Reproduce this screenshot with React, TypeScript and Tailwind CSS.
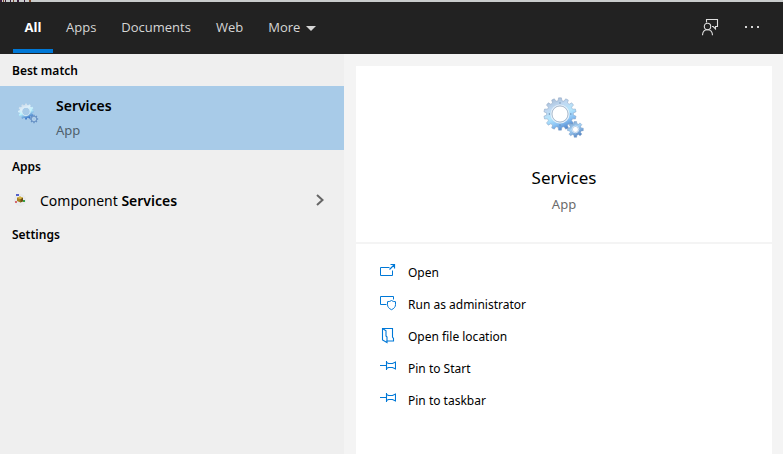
import React from 'react';

type IconProps = { className?: string };

// Outline of a cog: each tooth is a short trapezoid between the root and tip radius
const gearPath = (cx: number, cy: number, tip: number, root: number, teeth: number) => {
  const pts: string[] = [];
  const step = (Math.PI * 2) / teeth;
  for (let i = 0; i < teeth; i++) {
    const a = i * step - Math.PI / 2;
    [[-0.32, root], [-0.2, tip], [0.2, tip], [0.32, root]].forEach(([off, r]) => {
      const t = a + off * step;
      pts.push(`${(cx + r * Math.cos(t)).toFixed(2)} ${(cy + r * Math.sin(t)).toFixed(2)}`);
    });
  }
  return `M${pts.join('L')}Z`;
};

const hole = (cx: number, cy: number, r: number) =>
  `M${cx - r} ${cy}a${r} ${r} 0 1 0 ${r * 2} 0a${r} ${r} 0 1 0 ${-r * 2} 0Z`;

const GearsIcon: React.FC<IconProps> = ({ className }) => (
  <svg viewBox="0 0 48 48" className={className} aria-hidden="true">
    <defs>
      <linearGradient id="gear-big" x1="0.2" y1="0" x2="0.65" y2="1">
        <stop offset="0" stopColor="#a3b8d2" />
        <stop offset="0.3" stopColor="#c0d9f2" />
        <stop offset="0.55" stopColor="#b4e6fd" />
        <stop offset="0.75" stopColor="#8cc4f5" />
        <stop offset="1" stopColor="#4a7fc8" />
      </linearGradient>
      <linearGradient id="gear-small" x1="0" y1="0" x2="0.6" y2="1">
        <stop offset="0" stopColor="#6d93c2" />
        <stop offset="0.5" stopColor="#a6d2f5" />
        <stop offset="1" stopColor="#5887c4" />
      </linearGradient>
    </defs>
    <path
      d={gearPath(20, 20, 16.2, 13.4, 14) + hole(20, 20, 8.2)}
      fill="url(#gear-big)"
      fillRule="evenodd"
      stroke="#8ba3c0"
      strokeWidth="0.5"
    />
    <circle cx="20" cy="20" r="9" fill="none" stroke="#e4eef8" strokeWidth="1.2" />
    <circle cx="20" cy="20" r="8" fill="none" stroke="#a3b1c2" strokeWidth="0.6" />
    <g fill="#6688ad">
      <circle cx="20" cy="9" r="0.7" />
      <circle cx="9.4" cy="20" r="0.7" />
      <circle cx="30.8" cy="20" r="0.7" />
      <circle cx="20" cy="31" r="0.7" />
    </g>
    <path
      d={gearPath(35.4, 35.4, 8, 6, 8) + hole(35.4, 35.4, 3)}
      fill="url(#gear-small)"
      fillRule="evenodd"
      stroke="#6f94c0"
      strokeWidth="0.4"
    />
    <circle cx="35.4" cy="35.4" r="3.4" fill="none" stroke="#dbe9f6" strokeWidth="0.8" />
  </svg>
);

// List-size version, paler and with coarser teeth so it stays readable at 24px
const SmallGearsIcon: React.FC<IconProps> = ({ className }) => (
  <svg viewBox="0 0 24 24" className={className} aria-hidden="true">
    <defs>
      <linearGradient id="list-gear" x1="0" y1="0" x2="0.4" y2="1">
        <stop offset="0" stopColor="#c3cfdf" />
        <stop offset="0.4" stopColor="#dceefa" />
        <stop offset="0.65" stopColor="#b9f2fd" />
        <stop offset="1" stopColor="#3f78c8" />
      </linearGradient>
    </defs>
    <path d={gearPath(10, 9.5, 8, 6.6, 12) + hole(10, 9.5, 4)} fill="url(#list-gear)" fillRule="evenodd" />
    <circle cx="10" cy="9.5" r="4.2" fill="none" stroke="#e2f0f8" strokeWidth="0.8" />
    <path d={gearPath(18, 17, 4.2, 3.2, 8) + hole(18, 17, 1.3)} fill="#6590c4" fillRule="evenodd" />
    <circle cx="18" cy="17" r="1.8" fill="none" stroke="#c4def2" strokeWidth="0.9" />
  </svg>
);

const ComponentIcon: React.FC<IconProps> = ({ className }) => (
  <svg viewBox="0 0 16 16" className={className} aria-hidden="true">
    <circle cx="8" cy="8" r="5.5" fill="#e9ebee" stroke="#e0e3e9" strokeWidth="0.6" />
    <path d="M4 2h3v2H4z" fill="#5460c8" />
    <path d="M3 9h2v2H3z" fill="#d66a70" />
    <path d="M11 8h2v2h-2z" fill="#35a045" />
    <path d="M5 5.8l3-1.3 3 1.3v3.4l-2.5 1.3L5 9z" fill="#a98323" />
    <path d="M5 5.8l3-1.3 3 1.3-2.6 1.4z" fill="#d9b84a" />
    <path d="M8.5 7.2L11 5.8v3.4l-2.5 1.3z" fill="#6b5012" />
  </svg>
);

const FeedbackIcon: React.FC<IconProps> = ({ className }) => (
  <svg viewBox="0 0 18 18" className={className} fill="none" stroke="#dedede" strokeWidth="1.1" aria-hidden="true">
    <path d="M4.5 3.500v-3h11v7h-2v2.300L11.200 7.500H10" />
    <circle cx="5.500" cy="7.500" r="3.200" />
    <path d="M.5 16.300c.1-3.300 2.200-5.500 5-5.500s4.900 2.200 5 5.500" />
  </svg>
);

const OpenIcon = () => (
  <svg viewBox="0 0 16 16" className="size-4" fill="none" stroke="#0078d7" aria-hidden="true">
    <path d="M9.500 3.500H.5v8h12V6.500" />
    <path d="M9.500 5.500l5-5M10.500.5h4v4" strokeWidth="1.2" />
  </svg>
);

const AdminIcon = () => (
  <svg viewBox="0 0 16 16" className="size-4" fill="none" stroke="#0078d7" aria-hidden="true">
    <path d="M6.500 8.500h-6v-8h13v3" />
    <path d="M11.500 4.500c1 .8 2.300 1.200 4 1.200v3c0 2.200-1.500 3.900-4 5-2.500-1.100-4-2.800-4-5v-3c1.700 0 3-.4 4-1.200z" />
  </svg>
);

const FolderIcon = () => (
  <svg viewBox="0 0 16 16" className="size-4" fill="none" stroke="#0078d7" strokeWidth="1.1" aria-hidden="true">
    <path d="M2.500.5h10v8.500l1 1.500v2.500h-7" />
    <path d="M2.500.5l3.500 2.200v5.300l1 1v5.500l-4.500-2.500z" />
  </svg>
);

const PinIcon = () => (
  <svg viewBox="0 0 16 16" className="size-4" fill="none" stroke="#0078d7" strokeWidth="1.1" aria-hidden="true">
    <path d="M0 5.500h6M6.500 1v9M6.500 2.500l2 1h4l3-1.500v7l-3-1.500h-4l-2 1" />
  </svg>
);

const tabs = ['Apps', 'Documents', 'Web'];

const actions = [
  { label: 'Open', icon: <OpenIcon /> },
  { label: 'Run as administrator', icon: <AdminIcon /> },
  { label: 'Open file location', icon: <FolderIcon /> },
  { label: 'Pin to Start', icon: <PinIcon /> },
  { label: 'Pin to taskbar', icon: <PinIcon /> },
];

const Header = () => (
  <header className="flex h-[52px] items-stretch justify-between bg-[#222222] pr-[23px] pl-[13px] font-['Open_Sans',sans-serif] text-[13px] text-[#d6d6d6]">
    <nav className="flex gap-px">
      <button className="mb-px w-10 border-b-4 border-[#0078d7] pt-1 font-bold text-white">All</button>
      {tabs.map((tab) => (
        <button key={tab} className="px-3">{tab}</button>
      ))}
      <button className="flex items-center gap-[6px] px-3">
        More
        <svg viewBox="0 0 10 5" className="h-[5px] w-[10px]" fill="#d6d6d6" aria-hidden="true">
          <path d="M0 0h10L5 5z" />
        </svg>
      </button>
    </nav>
    <div className="flex items-center gap-6">
      <button aria-label="Feedback">
        <FeedbackIcon className="size-[18px]" />
      </button>
      <button aria-label="Options">
        <svg viewBox="0 0 16 16" className="size-4" fill="#d6d6d6" aria-hidden="true">
          <path d="M1 6h2v2H1zM7 6h2v2H7zM13 6h2v2h-2z" />
        </svg>
      </button>
    </div>
  </header>
);

const GroupTitle: React.FC<{ children: React.ReactNode }> = ({ children }) => (
  <h2 className="flex h-8 items-center px-3 pt-[2px] text-[12px] font-semibold">{children}</h2>
);

const Results = () => (
  <section className="w-[344px] shrink-0 bg-[#efefef]">
    <GroupTitle>Best match</GroupTitle>
    <button className="flex h-16 w-full items-start bg-[#a8cbe8] pt-2 pl-4 text-left">
      <SmallGearsIcon className="mt-2 size-6" />
      <span className="ml-4 flex flex-col">
        <span className="text-[14px] leading-6 font-semibold">Services</span>
        <span className="text-[13px] leading-6 text-[#4f5f6c]">App</span>
      </span>
    </button>
    <GroupTitle>Apps</GroupTitle>
    <button className="flex h-9 w-full items-center pr-5 pl-3 text-left text-[14px]">
      <ComponentIcon className="size-4" />
      <span className="ml-3 flex-1">
        Component <span className="font-semibold">Services</span>
      </span>
      <svg viewBox="0 0 8 12" className="h-3 w-2" fill="none" stroke="#666666" strokeWidth="2" aria-hidden="true">
        <path d="M1 1l5.500 5L1 11" />
      </svg>
    </button>
    <GroupTitle>Settings</GroupTitle>
  </section>
);

const Details = () => (
  <section className="flex flex-1 flex-col gap-[2px] bg-[#f4f4f4] pt-3 pr-[11px] pl-3">
    <div className="flex h-44 flex-col items-center bg-white pt-7">
      <GearsIcon className="size-12" />
      <h1 className="mt-6 text-[17px] leading-6">Services</h1>
      <p className="text-[13px] leading-7 text-[#6b6b6b]">App</p>
    </div>
    <ul className="flex-1 bg-white px-6 pt-3">
      {actions.map((action) => (
        <li key={action.label}>
          <button className="flex h-8 w-full items-center gap-3 text-left text-[12px]">
            {action.icon}
            <span className="pt-[2px]">{action.label}</span>
          </button>
        </li>
      ))}
    </ul>
  </section>
);

const App: React.FC = () => (
  <div className="flex min-h-screen flex-col bg-[#efefef] font-['Noto_Sans',sans-serif] text-black">
    <div className="h-[2px] bg-[#c9cccc]">
      <svg viewBox="0 0 36 2" className="h-[2px] w-9" aria-hidden="true">
        <path d="M0 0h2v2H0zM5 0h1v2H5zM10 0h1v2h-1zM17 0h2v2h-2zM24 0h1v2h-1z" fill="#3a1d3c" />
        <path d="M3 0h1v2H3zM13 0h1v2h-1zM29 0h2v2h-2z" fill="#7b4a2c" />
      </svg>
    </div>
    <Header />
    <main className="flex flex-1">
      <Results />
      <Details />
    </main>
  </div>
);

export default App;
